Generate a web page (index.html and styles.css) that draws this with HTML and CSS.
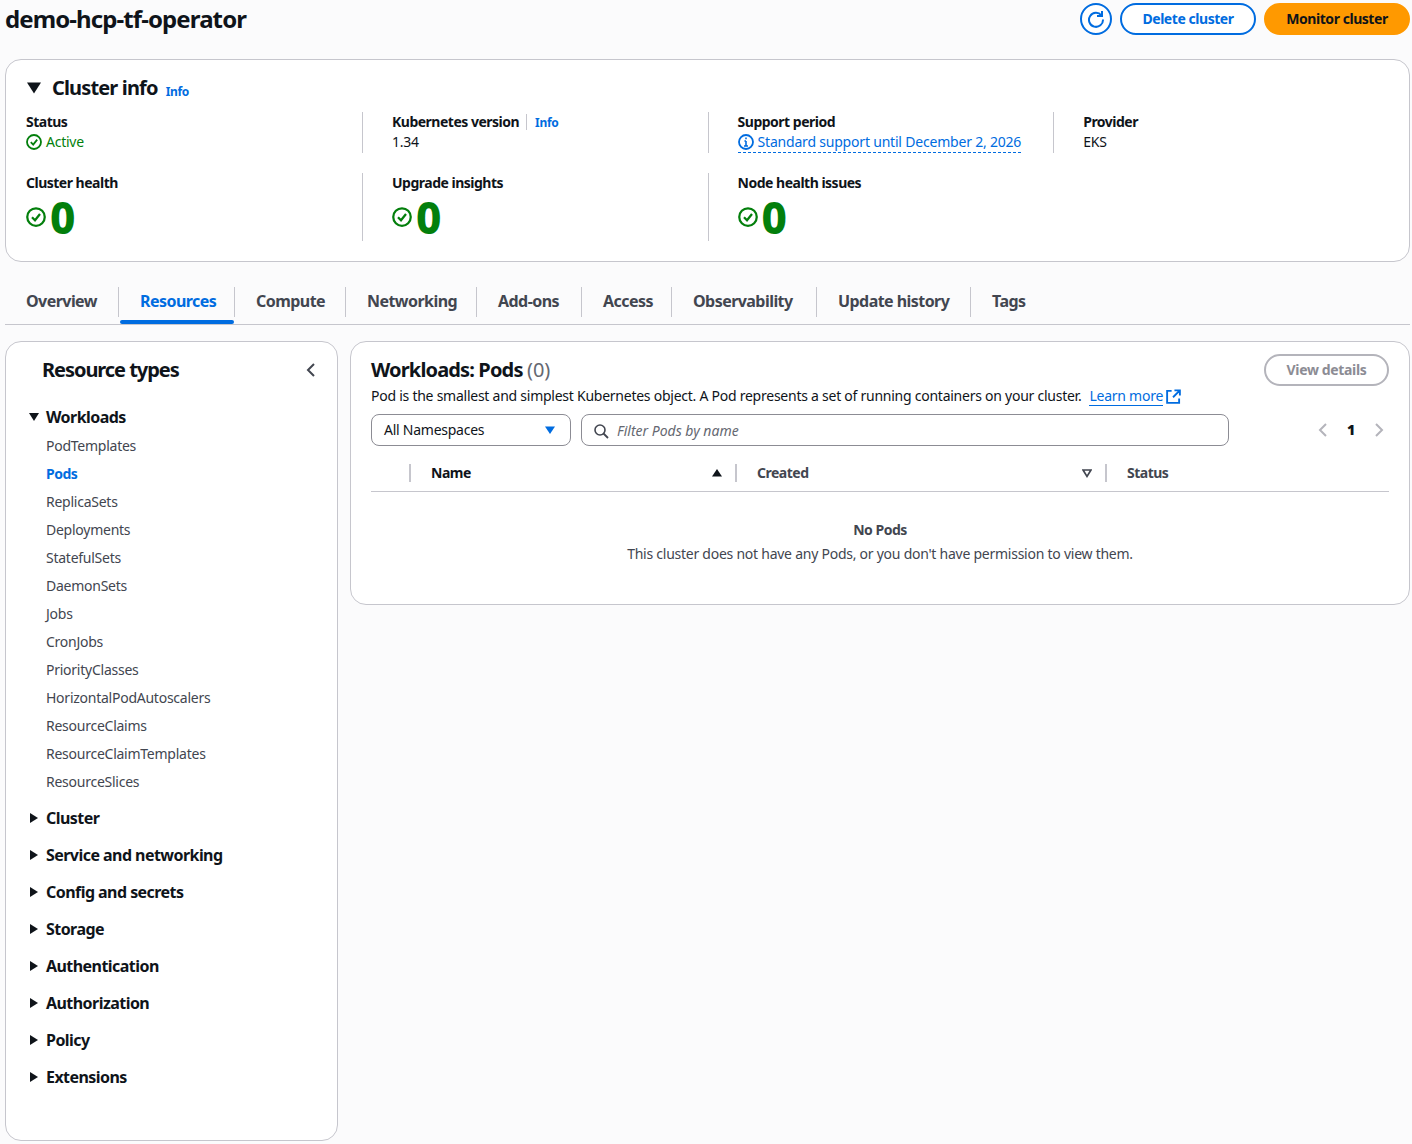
FILE: index.html
```html
<!DOCTYPE html>
<html lang="en">
<head>
<meta charset="utf-8">
<title>demo-hcp-tf-operator</title>
<link rel="stylesheet" href="styles.css">
</head>
<body>
<svg class="defs" width="0" height="0" aria-hidden="true">
  <symbol id="ok" viewBox="0 0 16 16"><circle cx="8" cy="8" r="7" fill="none" stroke="currentColor" stroke-width="1.8"/><path d="M4.8 8.2 7.2 10.6 11.2 5.6" fill="none" stroke="currentColor" stroke-width="1.8"/></symbol>
  <symbol id="right" viewBox="0 0 10 10"><path d="M1 0 9 5 1 10Z" fill="currentColor"/></symbol>
  <symbol id="down" viewBox="0 0 10 10"><path d="M0 1H10L5 9Z" fill="currentColor"/></symbol>
</svg>
<header class="top">
  <h1 class="title">demo-hcp-tf-operator</h1>
  <div class="actions">
    <button class="btn icon-btn" aria-label="Refresh"><svg width="18" height="18" viewBox="0 0 18 18"><path d="M14.5 5.5A7 7 0 1 0 16 9.5" fill="none" stroke="currentColor" stroke-width="2"/><path d="M15 1V6H10" fill="none" stroke="currentColor" stroke-width="2"/></svg></button>
    <button class="btn btn-normal">Delete cluster</button>
    <button class="btn btn-primary">Monitor cluster</button>
  </div>
</header>

<section class="card info">
  <div class="info-head">
    <svg class="tri-lg"><use href="#down"/></svg>
    <h2 class="h-info">Cluster info</h2>
    <a class="info-link">Info</a>
  </div>
  <div class="info-grid">
    <div class="cell"><div class="label">Status</div><div class="ok-line"><svg class="ic16"><use href="#ok"/></svg>Active</div></div>
    <div class="cell"><div class="label">Kubernetes version<span class="label-info">Info</span></div><div class="val">1.34</div></div>
    <div class="cell"><div class="label">Support period</div><div class="support"><svg width="16" height="16" viewBox="0 0 16 16"><circle cx="8" cy="8" r="7" fill="none" stroke="currentColor" stroke-width="1.8"/><path d="M8 7V12M6 12H10M6.4 7H8" fill="none" stroke="currentColor" stroke-width="1.6"/><path d="M7.2 3.6H8.8V5.2H7.2Z" fill="currentColor"/></svg>Standard support until December 2, 2026</div></div>
    <div class="cell"><div class="label">Provider</div><div class="val">EKS</div></div>
    <div class="cell"><div class="label">Cluster health</div><div class="count"><svg class="ic20"><use href="#ok"/></svg><span>0</span></div></div>
    <div class="cell"><div class="label">Upgrade insights</div><div class="count"><svg class="ic20"><use href="#ok"/></svg><span>0</span></div></div>
    <div class="cell"><div class="label">Node health issues</div><div class="count"><svg class="ic20"><use href="#ok"/></svg><span>0</span></div></div>
  </div>
</section>

<nav class="tabs">
  <a class="tab">Overview</a>
  <a class="tab active">Resources</a>
  <a class="tab">Compute</a>
  <a class="tab">Networking</a>
  <a class="tab">Add-ons</a>
  <a class="tab">Access</a>
  <a class="tab">Observability</a>
  <a class="tab">Update history</a>
  <a class="tab">Tags</a>
</nav>

<div class="split">
  <aside class="card side">
    <div class="side-head">
      <h2 class="h-side">Resource types</h2>
      <svg width="16" height="16" viewBox="0 0 16 16"><path d="M11 2 5 8 11 14" fill="none" stroke="#424650" stroke-width="2"/></svg>
    </div>
    <div class="group open"><svg class="tri"><use href="#down"/></svg>Workloads</div>
    <ul class="subs">
      <li>PodTemplates</li>
      <li class="current">Pods</li>
      <li>ReplicaSets</li>
      <li>Deployments</li>
      <li>StatefulSets</li>
      <li>DaemonSets</li>
      <li>Jobs</li>
      <li>CronJobs</li>
      <li>PriorityClasses</li>
      <li>HorizontalPodAutoscalers</li>
      <li>ResourceClaims</li>
      <li>ResourceClaimTemplates</li>
      <li>ResourceSlices</li>
    </ul>
    <div class="group"><svg class="tri"><use href="#right"/></svg>Cluster</div>
    <div class="group"><svg class="tri"><use href="#right"/></svg>Service and networking</div>
    <div class="group"><svg class="tri"><use href="#right"/></svg>Config and secrets</div>
    <div class="group"><svg class="tri"><use href="#right"/></svg>Storage</div>
    <div class="group"><svg class="tri"><use href="#right"/></svg>Authentication</div>
    <div class="group"><svg class="tri"><use href="#right"/></svg>Authorization</div>
    <div class="group"><svg class="tri"><use href="#right"/></svg>Policy</div>
    <div class="group"><svg class="tri"><use href="#right"/></svg>Extensions</div>
  </aside>

  <main class="card pods">
    <div class="pods-head">
      <div class="pods-text">
        <h2 class="h-pods">Workloads: Pods <span class="cnt">(0)</span></h2>
        <p class="desc">Pod is the smallest and simplest Kubernetes object. A Pod represents a set of running containers on your cluster.<a class="learn">Learn more</a><svg class="ext" width="15" height="15" viewBox="0 0 16 16"><path d="M6 2H1.2V14.8H14V10M9 1.5H14.8V7M14.5 1.8 7.5 8.8" fill="none" stroke="currentColor" stroke-width="2"/></svg></p>
      </div>
      <button class="btn btn-disabled">View details</button>
    </div>
    <div class="filters">
      <div class="select"><span>All Namespaces</span><svg width="12" height="10" viewBox="0 0 10 10"><path d="M0 1.5H10L5 9Z" fill="#006ce0"/></svg></div>
      <div class="search"><svg width="16" height="16" viewBox="0 0 16 16"><circle cx="7" cy="7" r="5" fill="none" stroke="#424650" stroke-width="1.6"/><path d="M10.5 10.5 15 15" stroke="#424650" stroke-width="1.8"/></svg><span>Filter Pods by name</span></div>
      <div class="pager">
        <svg width="16" height="16" viewBox="0 0 16 16"><path d="M11 2 5 8 11 14" fill="none" stroke="#b4b4bb" stroke-width="2"/></svg>
        <b>1</b>
        <svg width="16" height="16" viewBox="0 0 16 16"><path d="M5 2 11 8 5 14" fill="none" stroke="#b4b4bb" stroke-width="2"/></svg>
      </div>
    </div>
    <div class="thead">
      <div class="th-sel"></div>
      <div class="th th-name"><span>Name</span><svg width="10" height="10" viewBox="0 0 10 10"><path d="M0 8.5H10L5 1Z" fill="#0f141a"/></svg></div>
      <div class="th th-created"><span>Created</span><svg width="10" height="10" viewBox="0 0 10 10"><path d="M1 2H9L5 8.4Z" fill="none" stroke="#424650" stroke-width="1.7"/></svg></div>
      <div class="th th-status"><span>Status</span></div>
    </div>
    <div class="empty">
      <b>No Pods</b>
      <p>This cluster does not have any Pods, or you don't have permission to view them.</p>
    </div>
  </main>
</div>
</body>
</html>
```
FILE: styles.css
```css
* { box-sizing: border-box; }
html, body { margin: 0; padding: 0; }
body {
  background: #fbfbfc;
  color: #0f141a;
  font-family: "Noto Sans", "Open Sans", sans-serif;
  font-size: 14px;
  line-height: 20px;
  letter-spacing: -0.25px;
  padding: 3px 2px 3px 5px;
  height: 1144px;
  overflow: hidden;
}
.defs { position: absolute; }
h1, h2, p, ul { margin: 0; padding: 0; }
svg { display: block; flex: none; }
a { color: #006ce0; }

.top { display: flex; justify-content: space-between; align-items: center; height: 32px; margin-bottom: 24px; }
.title { font-size: 24px; line-height: 34px; font-weight: 700; letter-spacing: -0.9px; }
.actions { display: flex; gap: 8px; }
.btn {
  height: 32px; border-radius: 20px; border: 2px solid #006ce0; background: #fff;
  color: #006ce0; font: 700 14px/20px "Noto Sans", sans-serif; letter-spacing: -0.45px; padding: 0 20px;
  display: flex; align-items: center; justify-content: center;
}
.icon-btn { width: 32px; padding: 0; }
.btn-normal { width: 136px; padding: 0; }
.btn-primary { width: 146px; padding: 0; background: #ff9900; border-color: #ff9900; color: #0f141a; }
.btn-disabled { width: 125px; padding: 0; border-color: #b4b4bb; color: #8c8c94; letter-spacing: -0.35px; }

.card { background: #fff; border: 1px solid #c6c6cd; border-radius: 16px; }
.info { height: 203px; padding: 0 0 0 20px; }
.info-head { display: flex; align-items: center; height: 28px; margin-top: 14px; margin-bottom: 10px; }
.tri-lg { width: 14px; height: 14px; margin-left: 1px; margin-right: 11px; }
.h-info { font-size: 20px; line-height: 28px; font-weight: 700; letter-spacing: -0.85px; }
.info-link { font-size: 12px; font-weight: 700; margin-left: 8px; margin-top: 8px; letter-spacing: -0.3px; }
.info-grid { display: grid; grid-template-columns: 336px repeat(3, 345.6px); row-gap: 20px; }
.cell { border-left: 1px solid #c6c6cd; padding-left: 29px; }
.cell:first-child, .cell:nth-child(5) { border-left: 0; padding-left: 0; }
.cell:nth-child(-n+4) { height: 41px; }
.cell:nth-child(n+5) { height: 68px; }
.label { font-weight: 700; line-height: 20px; display: flex; align-items: center; letter-spacing: -0.5px; }
.label-info { color: #006ce0; font-size: 12px; margin-left: 7px; padding-left: 8px; border-left: 1px solid #c6c6cd; height: 16px; line-height: 18px; letter-spacing: -0.3px; }
.ok-line { display: flex; align-items: center; gap: 4px; color: #037f0c; }
.ic16 { width: 16px; height: 16px; }
.ic20 { width: 20px; height: 20px; margin-right: 4px; margin-top: 14px; color: #037f0c; }
.val { color: #0f141a; }
.support { display: inline-flex; align-items: center; gap: 4px; color: #006ce0; border-bottom: 1px dashed #006ce0; height: 21px; letter-spacing: -0.2px; }
.count { display: flex; align-items: flex-start; color: #037f0c; font-size: 44px; line-height: 48px; font-weight: 800; }
.count span { display: block; letter-spacing: 0; }

.tabs { display: flex; height: 42px; margin-top: 21px; border-bottom: 1px solid #c6c6cd; }
.tab { color: #424650; font-size: 16px; font-weight: 700; line-height: 20px; padding: 0 0 2px 21px; height: 30px; display: flex; align-items: center; border-left: 1px solid #c6c6cd; position: relative; margin-top: 4px; letter-spacing: -0.55px; white-space: nowrap; }
.tab:first-child { border-left: 0; width: 113px; }
.tab:nth-child(2) { width: 116px; }
.tab:nth-child(3) { width: 111px; }
.tab:nth-child(4) { width: 131px; }
.tab:nth-child(5) { width: 105px; }
.tab:nth-child(6) { width: 90px; }
.tab:nth-child(7) { width: 145px; }
.tab:nth-child(8) { width: 154px; }
.tab.active { color: #006ce0; }
.tab.active::after { content: ""; position: absolute; left: 1px; right: 0; bottom: -7px; height: 4px; background: #006ce0; border-radius: 2px; }

.split { display: grid; grid-template-columns: 333px 1060px; column-gap: 12px; align-items: start; margin-top: 16px; }
.side { height: 800px; padding: 0 0 0 23px; }
.side-head { display: flex; justify-content: space-between; align-items: center; height: 28px; margin: 14px 18px 0 13px; }
.h-side { font-size: 20px; line-height: 28px; font-weight: 700; letter-spacing: -1.05px; }
.h-pods { font-size: 20px; line-height: 28px; font-weight: 700; letter-spacing: -0.85px; }
.group { display: flex; align-items: center; font-size: 16px; font-weight: 700; height: 37px; line-height: 20px; letter-spacing: -0.55px; }
.group.open { margin-top: 14px; }
.tri { width: 10px; height: 10px; margin-right: 7px; }
.subs { list-style: none; padding-left: 17px; margin-top: -3px; margin-bottom: 3px; color: #424650; }
.subs li { height: 28px; line-height: 28px; }
.subs .current { color: #006ce0; font-weight: 700; letter-spacing: -0.5px; }

.pods { height: 264px; padding: 12px 20px 0 20px; }
.pods-head { display: flex; justify-content: space-between; align-items: flex-start; }
.pods-text { padding-top: 2px; }
.cnt { font-weight: 400; color: #656871; letter-spacing: 0; }
.desc { line-height: 20px; margin-top: 2px; display: flex; align-items: center; white-space: nowrap; }
.learn { color: #006ce0; margin-left: 8px; border-bottom: 1px solid #006ce0; line-height: 19px; }
.ext { color: #006ce0; margin-left: 3px; }
.filters { display: flex; align-items: center; margin-top: 8px; }
.select { width: 200px; height: 32px; border: 1px solid #8c8c94; border-radius: 8px; background: #fff; display: flex; justify-content: space-between; align-items: center; padding: 0 14px 0 12px; }
.search { width: 648px; height: 32px; margin-left: 10px; border: 1px solid #8c8c94; border-radius: 8px; background: #fff; display: flex; align-items: center; gap: 8px; padding: 1px 0 0 11px; font-style: italic; color: #656871; letter-spacing: 0; }
.pager { display: flex; align-items: center; gap: 16px; margin-left: 86px; font-weight: 700; }
.thead { display: grid; grid-template-columns: 38px 326px 370px 1fr; height: 37px; align-items: center; margin-top: 9px; border-bottom: 1px solid #c6c6cd; }
.th { display: flex; align-items: center; justify-content: space-between; height: 18px; border-left: 2px solid #c6c6cd; padding-left: 20px; padding-right: 13px; font-weight: 700; letter-spacing: -0.5px; color: #424650; }
.th-name { color: #0f141a; }
.empty { text-align: center; padding-top: 28px; color: #424650; }
.empty b { display: block; line-height: 20px; letter-spacing: -0.5px; }
.empty p { line-height: 20px; margin-top: 4px; }
```
